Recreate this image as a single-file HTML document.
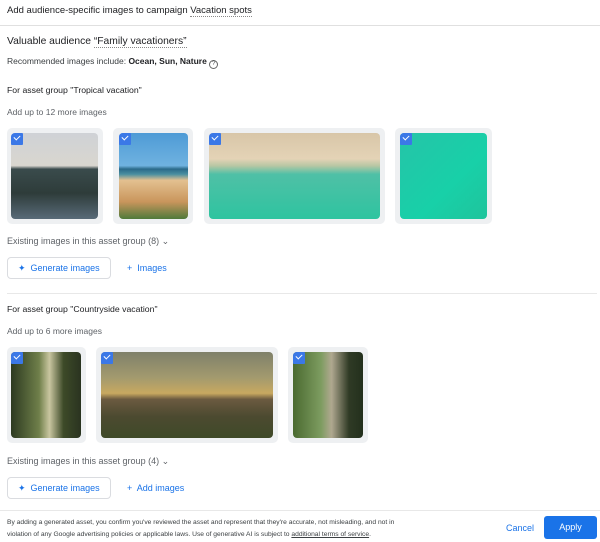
<!DOCTYPE html>
<html><head><meta charset="utf-8"><style>
*{margin:0;padding:0;box-sizing:border-box}
body{width:600px;height:542px;background:#fff;font-family:"Liberation Sans",Arial,sans-serif;color:#202124;position:relative;overflow:hidden}
.a{position:absolute;white-space:nowrap}
.card{position:absolute;background:#eef0f2;border-radius:5px}
.img{position:absolute;border-radius:4px;overflow:hidden}
.chk{position:absolute;left:0;top:0;width:12px;height:12px;background:#3b78e7;border-radius:1px}
.chk:after{content:"";position:absolute;left:3px;top:2px;width:5px;height:3px;border-left:1.5px solid #fff;border-bottom:1.5px solid #fff;transform:rotate(-45deg)}
.btn{position:absolute;border:1px solid #dadce0;border-radius:4px;height:22px;font-size:9px;color:#1a73e8;line-height:20px;padding-left:10px}
.blue{color:#1a73e8;font-size:9px}
.gray{color:#5f6368;font-size:8.5px}
</style></head><body>
<div class="a" style="left:7px;top:5px;font-size:9.5px">Add audience-specific images to campaign <span style="border-bottom:1px dotted #888">Vacation spots</span></div>
<div class="a" style="left:0;top:25px;width:600px;height:1px;background:#e0e0e0"></div>
<div class="a" style="left:7px;top:36px;font-size:10.3px">Valuable audience <span style="border-bottom:1px dotted #888">“Family vacationers”</span></div>
<div class="a" style="left:7px;top:56px;color:#3c4043;font-size:8.5px">Recommended images include: <b style="color:#202124">Ocean, Sun, Nature</b> <span style="display:inline-block;width:9px;height:9px;border:1px solid #666;border-radius:50%;font-size:6px;text-align:center;line-height:7px;vertical-align:-1px">?</span></div>
<div class="a" style="left:7px;top:85px;font-size:8.7px">For asset group "Tropical vacation"</div>
<div class="a gray" style="left:7px;top:107px">Add up to 12 more images</div>

<div class="card" style="left:7px;top:128px;width:96px;height:96px"></div>
<div class="img" style="left:11px;top:133px;width:87px;height:86px;background:linear-gradient(#cfd2d6 0%,#d9d6cf 38%,#3a4b4c 42%,#2e3c3a 70%,#586a78 100%)"><div class="chk"></div></div>
<div class="card" style="left:113px;top:128px;width:80px;height:96px"></div>
<div class="img" style="left:119px;top:133px;width:69px;height:86px;background:linear-gradient(#4e9bd6 0%,#6fb2e0 38%,#2b6a8a 42%,#4a8fa0 48%,#e3c090 55%,#c9955c 80%,#4f7a3a 100%)"><div class="chk"></div></div>
<div class="card" style="left:204px;top:128px;width:181px;height:96px"></div>
<div class="img" style="left:209px;top:133px;width:171px;height:86px;background:linear-gradient(#d8c6a8 0%,#e4d3b6 30%,#b9c7a4 38%,#4fc0a6 48%,#2ec4a0 100%)"><div class="chk"></div></div>
<div class="card" style="left:395px;top:128px;width:97px;height:96px"></div>
<div class="img" style="left:400px;top:133px;width:87px;height:86px;background:linear-gradient(135deg,#25c4a8,#18d0a8 60%,#1fc49c)"><div class="chk"></div></div>

<div class="a gray" style="left:7px;top:236px;font-size:9px">Existing images in this asset group (8) ⌄</div>
<div class="btn" style="left:7px;top:257px;width:104px">✦&nbsp; Generate images</div>
<div class="a blue" style="left:127px;top:263px">+&nbsp; Images</div>
<div class="a" style="left:7px;top:293px;width:590px;height:1px;background:#e8e8e8"></div>
<div class="a" style="left:7px;top:304px;font-size:8.7px">For asset group "Countryside vacation"</div>
<div class="a gray" style="left:7px;top:326px">Add up to 6 more images</div>

<div class="card" style="left:7px;top:347px;width:79px;height:96px"></div>
<div class="img" style="left:11px;top:352px;width:70px;height:86px;background:linear-gradient(90deg,#2c3a20,#6f7f4a 40%,#c9c6a0 55%,#3d4a28 75%,#2a3320)"><div class="chk"></div></div>
<div class="card" style="left:96px;top:347px;width:182px;height:96px"></div>
<div class="img" style="left:101px;top:352px;width:172px;height:86px;background:linear-gradient(#7f806a 0%,#a39a6e 30%,#c8a860 48%,#6b5a40 55%,#4c4a30 75%,#3f4a28 100%)"><div class="chk"></div></div>
<div class="card" style="left:288px;top:347px;width:80px;height:96px"></div>
<div class="img" style="left:293px;top:352px;width:70px;height:86px;background:linear-gradient(90deg,#4a6a30,#7d9c60 40%,#b0a890 55%,#2f3a25 80%,#23301c)"><div class="chk"></div></div>

<div class="a gray" style="left:7px;top:456px;font-size:9px">Existing images in this asset group (4) ⌄</div>
<div class="btn" style="left:7px;top:477px;width:104px">✦&nbsp; Generate images</div>
<div class="a blue" style="left:127px;top:483px">+&nbsp; Add images</div>
<div class="a" style="left:0;top:510px;width:600px;height:1px;background:#e8e8e8"></div>
<div class="a" style="left:7px;top:517px;font-size:6.7px;color:#3c4043;line-height:12px">By adding a generated asset, you confirm you've reviewed the asset and represent that they're accurate, not misleading, and not in<br>violation of any Google advertising policies or applicable laws. Use of generative AI is subject to <u>additional terms of service</u>.</div>
<div class="a blue" style="left:506px;top:523px">Cancel</div>
<div class="a" style="left:544px;top:516px;width:53px;height:23px;background:#1a73e8;border-radius:3px;color:#fff;font-size:9px;text-align:center;line-height:23px">Apply</div>
</body></html>
